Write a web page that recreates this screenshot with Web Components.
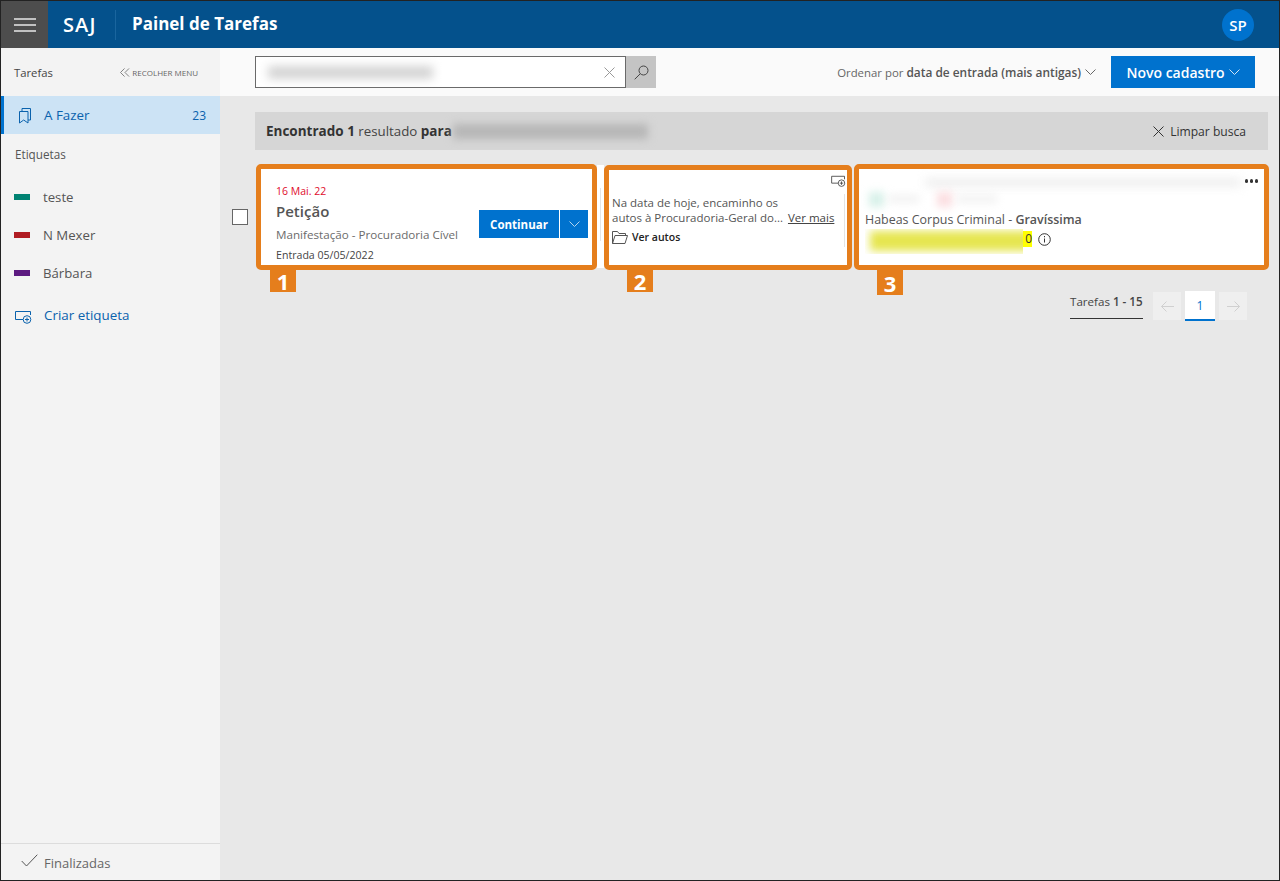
<!DOCTYPE html>
<html lang="pt-BR">
<head>
<meta charset="utf-8">
<title>Painel de Tarefas</title>
<style>
  html, body { margin: 0; height: 100%; }
  body { font-family: "Open Sans", "Noto Sans", sans-serif; }
</style>
</head>
<body>
<saj-app></saj-app>
<script>
(function () {
const ICONS = {
  menu: '<svg width="22" height="14" viewBox="0 0 22 14"><path d="M0 1h22M0 7h22M0 13h22" stroke="#e8e8e8" stroke-width="1.4" fill="none"/></svg>',
  dbl: '<svg width="10" height="9" viewBox="0 0 11 10"><path d="M5 .5.5 5 5 9.500M10 .5 5.500 5 10 9.500" stroke="#777" fill="none"/></svg>',
  book: '<svg width="14" height="17" viewBox="0 0 14 17"><path d="M1.500 4.500h8.500v11.500L5.700 13 1.500 16zM4 4.500V1.500h8.500v11.500H10" stroke="#0a62ad" fill="none"/></svg>',
  tagadd: '<svg width="17" height="14" viewBox="0 0 17 14"><path d="M8 9.500H.5V1.500h15v3.500" stroke="currentColor" fill="none"/><circle cx="12" cy="9.500" r="3.800" stroke="currentColor" fill="none"/><path d="M12 7.500v4M10 9.500h4" stroke="currentColor" fill="none"/></svg>',
  check: '<svg width="17" height="13" viewBox="0 0 17 13"><path d="M.7 7 5.500 12 16.300.7" stroke="#555" fill="none"/></svg>',
  x: '<svg width="11" height="11" viewBox="0 0 11 11"><path d="M.5.5l10 10M10.500.5l-10 10" stroke="currentColor" fill="none"/></svg>',
  search: '<svg width="15" height="15" viewBox="0 0 15 15"><circle cx="9.500" cy="5.500" r="4.500" stroke="#444" fill="none"/><path d="M6.300 8.700.7 14.300" stroke="#444" fill="none"/></svg>',
  chev: '<svg width="11" height="6" viewBox="0 0 11 6"><path d="M.5.5l5 5 5-5" stroke="currentColor" fill="none"/></svg>',
  folder: '<svg width="16" height="13" viewBox="0 0 16 13"><path d="M.5 12.500V.5h5l1.500 2h6.500v2M.5 12.500 3 4.500h12.500l-2.500 8z" stroke="#555" fill="none"/></svg>',
  info: '<svg width="13" height="13" viewBox="0 0 13 13"><circle cx="6.500" cy="6.500" r="5.800" stroke="#333" fill="none"/><path d="M6.500 5.500v4" stroke="#333" fill="none"/><path d="M6.500 3v1.300" stroke="#333" fill="none"/></svg>',
  left: '<svg width="13" height="11" viewBox="0 0 13 11"><path d="M5.500.5l-5 5 5 5M.5 5.500H13" stroke="currentColor" fill="none"/></svg>',
  right: '<svg width="13" height="11" viewBox="0 0 13 11"><path d="M7.500.5l5 5-5 5M12.500 5.500H0" stroke="currentColor" fill="none"/></svg>'
};

// small helper, every element below is only markup + styles
function define(name, css, html) {
  const tmpl = document.createElement('template');
  tmpl.innerHTML = `<style>${css}</style>${html}`;
  customElements.define(name, class extends HTMLElement {
    constructor() {
      super();
      this.attachShadow({mode: 'open'}).appendChild(tmpl.content.cloneNode(true));
    }
  });
}

define('saj-header', `
  :host { display: flex; align-items: center; height: 47px; background: #04518c; color: #fff; flex: none; }
  .burger { width: 47px; height: 47px; background: #4d4d4d; display: flex; align-items: center; justify-content: center; }
  .saj { font-size: 20px; font-weight: 600; letter-spacing: 1.100px; margin-left: 15px; width: 52px; padding-bottom: 1px; }
  .sep { width: 1px; height: 30px; background: #1a659e; }
  .title { font-size: 17px; font-weight: 700; margin-left: 16px; flex: 1; padding-bottom: 3px; }
  .avatar { width: 32px; height: 32px; border-radius: 50%; background: #0072ce; font-size: 15px; font-weight: 600;
    display: flex; align-items: center; justify-content: center; margin-right: 25px; }
`, `
  <div class="burger">${ICONS.menu}</div>
  <div class="saj">SAJ</div><div class="sep"></div>
  <div class="title">Painel de Tarefas</div>
  <div class="avatar">SP</div>
`);

define('saj-side-label', `
  :host { display: flex; align-items: center; height: 38px; padding-left: 13px; font-size: 13.200px; color: #555; }
  i { width: 16px; height: 6px; background: var(--c); margin-right: 13px; }
`, `<i></i><slot></slot>`);

define('saj-sidebar', `
  :host { display: flex; flex-direction: column; width: 219px; flex: none; background: #f3f3f3; color: #444; font-size: 11.500px; }
  .top { display: flex; align-items: center; justify-content: space-between; height: 48px; padding: 0 22px 0 13px; font-size: 11.300px; }
  .top span { display: flex; align-items: center; gap: 2px; font-size: 8px; color: #666; }
  .todo { display: flex; align-items: center; height: 38px; background: #cce3f5; border-left: 3px solid #0072ce;
    color: #0a62ad; font-size: 13.400px; padding: 0 14px 0 14px; }
  .todo svg { margin-right: 12px; }
  .todo b { font-weight: 400; margin-left: auto; font-size: 12px; }
  .etq { padding: 12px 0 0 14px; height: 32px; color: #555; font-size: 11.700px; }
  .new { display: flex; align-items: center; height: 38px; margin-top: 4px; padding-left: 14px; color: #0a62ad; font-size: 13.400px; }
  .new svg { margin-right: 12px; position: relative; top: 2px; }
  .done { margin-top: auto; display: flex; align-items: center; height: 37px; border-top: 1px solid #dcdcdc;
    padding: 1px 0 0 20px; box-sizing: border-box; font-size: 13px; color: #666; }
  .done svg { margin-right: 6px; position: relative; top: -2px; }
`, `
  <div class="top">Tarefas<span>${ICONS.dbl}RECOLHER MENU</span></div>
  <div class="todo">${ICONS.book}A Fazer<b>23</b></div>
  <div class="etq">Etiquetas</div>
  <saj-side-label style="--c:#008272">teste</saj-side-label>
  <saj-side-label style="--c:#b01c22">N Mexer</saj-side-label>
  <saj-side-label style="--c:#5c1a80">Bárbara</saj-side-label>
  <div class="new">${ICONS.tagadd}Criar etiqueta</div>
  <div class="done">${ICONS.check}Finalizadas</div>
`);

define('saj-toolbar', `
  :host { display: flex; align-items: center; height: 48px; background: #fafafa; padding: 0 24px 0 35px; flex: none; }
  .search { display: flex; width: 371px; height: 32px; box-sizing: border-box; border: 1px solid #6a6a6a; background: #fff;
    align-items: center; justify-content: space-between; padding: 0 10px 0 12px; color: #999; }
  .blur { width: 165px; height: 13px; background: #d4d4d4; filter: blur(5px); }
  .go { width: 30px; height: 32px; background: #c4c4c4; display: flex; align-items: center; justify-content: center; }
  .sort { margin-left: auto; font-size: 11.400px; color: #666; display: flex; align-items: center; }
  .sort b { font-size: 11.900px; font-weight: 600; color: #555; margin-left: 3px; }
  .sort svg { margin-left: 4px; color: #666; }
  .new { margin-left: 15px; width: 144px; height: 32px; background: #0072ce; color: #fff; font-size: 14px; font-weight: 600;
    display: flex; align-items: center; justify-content: center; gap: 4px; }
  .new svg { color: #cfe3f5; }
`, `
  <div class="search"><div class="blur"></div>${ICONS.x}</div>
  <div class="go">${ICONS.search}</div>
  <div class="sort">Ordenar por <b>data de entrada (mais antigas)</b>${ICONS.chev}</div>
  <div class="new">Novo cadastro${ICONS.chev}</div>
`);

define('saj-results', `
  :host { display: flex; align-items: center; height: 38px; background: #d6d6d6; margin: 16px 11px 0 35px; padding: 0 22px 0 11px;
    font-size: 13.300px; color: #444; flex: none; overflow: hidden; }
  b { font-size: 13.500px; font-weight: 700; color: #333; }
  .blur { width: 195px; height: 15px; margin-left: 1px; background: #b6b6b6; filter: blur(4px); }
  .clear { margin-left: auto; display: flex; align-items: center; gap: 6px; font-size: 12.100px; color: #333; }
`, `
  <b>Encontrado 1</b>&nbsp;resultado&nbsp;<b>para</b><div class="blur"></div>
  <div class="clear">${ICONS.x}Limpar busca</div>
`);

// orange annotation frame with its number below
define('saj-section', `
  :host { display: block; position: relative; box-sizing: border-box; height: 106px; border: 5px solid #e57e1c; border-radius: 5px;
    background: #fff; flex: none; }
  .num { position: absolute; top: calc(100% + 5px); left: var(--tag, 9px); width: 26px; height: var(--tag-h, 22px); background: #e57e1c;
    color: #fff; font-size: 22px; font-weight: 700; display: flex; align-items: center; justify-content: center; line-height: 1; }
`, `<slot></slot><div class="num"><slot name="num"></slot></div>`);

define('saj-task-main', `
  :host { display: flex; height: 100%; align-items: center; padding: 0 4px 0 15px; color: #555; }
  .txt { flex: 1; display: flex; flex-direction: column; padding-top: 15px; }
  .date { font-size: 10.500px; color: #e00b2b; line-height: 16px; }
  .name { font-size: 15px; font-weight: 600; color: #555; line-height: 25px; }
  .sub { font-size: 11.650px; color: #6b6b6b; line-height: 21px; }
  .in { font-size: 10.600px; color: #444; line-height: 21px; }
  .btn { height: 28px; background: #0072ce; color: #fff; display: flex; align-items: center; justify-content: center; margin-top: 14px; }
  .go { width: 80px; font-size: 11.500px; font-weight: 700; }
  .more { width: 28px; margin-left: 1px; color: #b5d5ef; }
`, `
  <div class="txt">
    <div class="date">16 Mai. 22</div>
    <div class="name">Petição</div>
    <div class="sub">Manifestação - Procuradoria Cível</div>
    <div class="in">Entrada 05/05/2022</div>
  </div>
  <div class="btn go">Continuar</div><div class="btn more">${ICONS.chev}</div>
`);

define('saj-task-note', `
  :host { display: flex; flex-direction: column; height: 100%; padding: 5px 1px 0 3px; box-sizing: border-box; font-size: 11.500px; color: #555; position: relative; }
  .tag { align-self: flex-end; color: #444; height: 18px; line-height: 0; }
  .tag svg { width: 15px; height: 12px; }
  p { margin: 0; padding-top: 2px; line-height: 15px; white-space: nowrap; }
  u { margin-left: 2px; color: #444; }
  .autos { display: flex; align-items: center; gap: 4px; margin-top: 5px; font-size: 10.500px; font-weight: 600; color: #222; }
  .line { position: absolute; right: 2px; top: 24px; height: 53px; width: 1px; background: #e4e4e4; }
`, `
  <div class="tag">${ICONS.tagadd}</div>
  <p>Na data de hoje, encaminho os<br>autos à Procuradoria-Geral do... <u>Ver mais</u></p>
  <div class="autos">${ICONS.folder}Ver autos</div>
  <div class="line"></div>
`);

define('saj-task-case', `
  :host { display: flex; flex-direction: column; height: 100%; padding: 4px 5px 0 6px; box-sizing: border-box; font-size: 12.450px; color: #555; }
  .top { display: flex; height: 37px; position: relative; }
  .b1 { position: absolute; left: 60px; top: 5px; width: 316px; height: 9px; background: #efefef; filter: blur(5px); }
  .b2 { position: absolute; left: 4px; top: 19px; width: 15px; height: 15px; background: #d6f0e8; filter: blur(4px); }
  .b3 { position: absolute; left: 24px; top: 23px; width: 30px; height: 6px; background: #eee; filter: blur(4px); }
  .b4 { position: absolute; left: 72px; top: 19px; width: 15px; height: 15px; background: #fbdde0; filter: blur(4px); }
  .b5 { position: absolute; left: 92px; top: 23px; width: 40px; height: 6px; background: #eee; filter: blur(4px); }
  .dots { position: absolute; right: 1px; top: 6px; display: flex; gap: 1.500px; }
  .dots i { width: 3.500px; height: 3.500px; border-radius: 50%; background: #333; }
  .kind { line-height: 19px; white-space: nowrap; }
  b { font-weight: 600; color: #555; }
  .num { display: flex; align-items: flex-start; height: 25px; }
  .clip { width: 158px; height: 25px; overflow: hidden; flex: none; }
  .mark { width: 162px; height: 20px; margin: 2px 0 0 5px; background: #e6e650; filter: blur(4px); }
  .hl { background: #ffff00; color: #333; font-size: 12px; line-height: 16px; width: 9px; margin-top: 2px; text-align: right; flex: none; }
  .num svg { margin: 4px 0 0 6px; }
`, `
  <div class="top"><div class="b1"></div><div class="b2"></div><div class="b3"></div><div class="b4"></div><div class="b5"></div>
    <div class="dots"><i></i><i></i><i></i></div></div>
  <div class="kind">Habeas Corpus Criminal - <b>Gravíssima</b></div>
  <div class="num"><div class="clip"><div class="mark"></div></div><div class="hl">0</div>${ICONS.info}</div>
`);

define('saj-pager', `
  :host { display: flex; justify-content: flex-end; align-items: flex-start; margin: 21px 32px 0 0; gap: 4px; flex: none; }
  .count { font-size: 11.600px; color: #444; width: 73px; height: 27px; border-bottom: 1px solid #333; line-height: 21px; margin-right: 6px; white-space: nowrap; }
  .count b { font-weight: 600; }
  .p { width: 28px; height: 28px; margin-top: 1px; background: #efefef; color: #d0d0d0; display: flex; align-items: center; justify-content: center; }
  .cur { width: 30px; height: 28px; margin-top: 0; background: #fff; border-bottom: 2px solid #0072ce; color: #0072ce; font-size: 12px; }
`, `
  <div class="count">Tarefas <b>1 - 15</b></div>
  <div class="p">${ICONS.left}</div><div class="p cur">1</div><div class="p">${ICONS.right}</div>
`);

define('saj-task-row', `
  :host { display: flex; align-items: flex-end; margin: 14px 0 0 12px; flex: none; }
  .check { width: 14px; height: 14px; border: 1px solid #666; background: #fff; margin: 0 8px 45px 0; flex: none; }
  .first { width: 341px; }
  .gap { width: 7px; height: 103px; margin-bottom: 2px; background: #fff; display: flex; justify-content: center; align-items: center; flex: none; }
  .gap i { width: 1px; height: 53px; background: #e4e4e4; margin-bottom: 4px; }
  .second { width: 248px; height: 105px; margin-right: 2px; --tag: 18px; }
  .third { width: 415px; --tag: 18px; --tag-h: 25px; }
`, `
  <div class="check"></div>
  <saj-section class="first"><saj-task-main></saj-task-main><span slot="num">1</span></saj-section>
  <div class="gap"><i></i></div>
  <saj-section class="second"><saj-task-note></saj-task-note><span slot="num">2</span></saj-section>
  <saj-section class="third"><saj-task-case></saj-task-case><span slot="num">3</span></saj-section>
`);

define('saj-app', `
  :host { display: flex; flex-direction: column; box-sizing: border-box; height: 881px; width: 1280px; border: 1px solid #222; overflow: hidden; }
  .body { flex: 1; display: flex; min-height: 0; }
  main { flex: 1; display: flex; flex-direction: column; background: #e8e8e8; min-width: 0; }
`, `
  <saj-header></saj-header>
  <div class="body">
    <saj-sidebar></saj-sidebar>
    <main>
      <saj-toolbar></saj-toolbar>
      <saj-results></saj-results>
      <saj-task-row></saj-task-row>
      <saj-pager></saj-pager>
    </main>
  </div>
`);
})();
</script>
</body>
</html>
